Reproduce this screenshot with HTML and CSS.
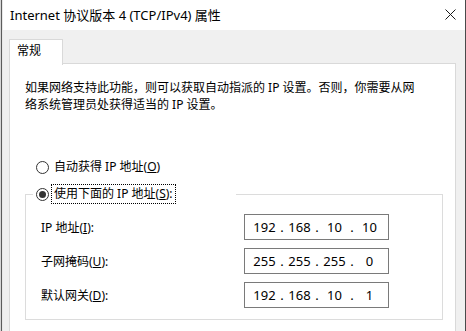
FILE: index.html
```html
<!DOCTYPE html>
<html>
    <head>
        <meta charset="utf-8">
        <title>Internet 协议版本 4 (TCP/IPv4) 属性</title>
        <link rel="stylesheet" href="styles.css">
    </head>
    <body>
        <div class="desk"></div>
        <div class="window">
            <div class="titlebar">
                <span class="title">Internet 协议版本 4 (TCP/IPv4) 属性</span>
                <svg class="close" width="11" height="11" viewBox="0 0 11 11">
                    <path d="M0.5 0.5 L10.5 10.5 M10.5 0.5 L0.5 10.5" stroke="#1a1a1a" stroke-width="1" fill="none"/>
                </svg>
            </div>

            <div class="content">
                <div class="tabs">
                    <div class="tab">常规</div>
                </div>
                <div class="panel">
                    <p class="desc">如果网络支持此功能，则可以获取自动指派的 IP 设置。否则，你需要从网<br>络系统管理员处获得适当的 IP 设置。</p>

                    <div class="radio-row">
                        <span class="radio"></span>
                        <span class="radio-text">自动获得 IP 地址(<u>O</u>)</span>
                    </div>

                    <fieldset class="group">
                        <legend class="radio-row legend">
                            <span class="radio checked"></span>
                            <span class="radio-text focus">使用下面的 IP 地址(<u>S</u>):</span>
                        </legend>

                        <div class="field">
                            <span class="label">IP 地址(<u>I</u>):</span>
                            <div class="ip">
                                <span class="octet">192</span><span class="dot">.</span><span class="octet">168</span><span class="dot">.</span><span class="octet">10</span><span class="dot">.</span><span class="octet">10</span>
                            </div>
                        </div>
                        <div class="field">
                            <span class="label">子网掩码(<u>U</u>):</span>
                            <div class="ip">
                                <span class="octet">255</span><span class="dot">.</span><span class="octet">255</span><span class="dot">.</span><span class="octet">255</span><span class="dot">.</span><span class="octet">0</span>
                            </div>
                        </div>
                        <div class="field">
                            <span class="label">默认网关(<u>D</u>):</span>
                            <div class="ip">
                                <span class="octet">192</span><span class="dot">.</span><span class="octet">168</span><span class="dot">.</span><span class="octet">10</span><span class="dot">.</span><span class="octet">1</span>
                            </div>
                        </div>
                    </fieldset>
                </div>
            </div>
        </div>
    </body>
</html>
```

FILE: styles.css
```css
body {
    margin: 0;
    width: 466px;
    height: 331px;
    overflow: hidden;
    display: flex;
    font-family: "Noto Sans", "Noto Sans CJK SC", sans-serif;
    font-size: 12px;
    color: #000;
    background-color: #f0f0f0;
}
/* bit of the window behind the dialog */
.desk {
    width: 3px;
    flex-shrink: 0;
    background: linear-gradient(to right, #d6d6d6 0, #d6d6d6 1px, #5c5c5c 1px, #5c5c5c 2px, #e8e8e8 2px);
}
.window {
    width: 462px;
    border-right: 1px solid #4a4a4a;
    background-color: #f0f0f0;
    display: flex;
    flex-direction: column;
}
.titlebar {
    height: 30px;
    flex-shrink: 0;
    background-color: #fff;
    display: flex;
    align-items: center;
    justify-content: space-between;
    padding: 0 9px 0 7px;
}
.title {
    font-size: 13px;
    line-height: 16px;
}
.close {
    display: block;
    margin-top: -1px;
}
.content {
    flex: 1;
    display: flex;
    flex-direction: column;
    padding: 9px 9px 0 6px;
}
.tabs {
    display: flex;
    height: 25px;
    margin-bottom: -1px;
}
.tab {
    position: relative;
    z-index: 1;
    width: 45px;
    height: 25px;
    padding-left: 7px;
    background-color: #fff;
    border: 1px solid #d9d9d9;
    border-bottom: none;
    line-height: 22px;
}
.panel {
    flex: 1;
    background-color: #fff;
    border: 1px solid #d9d9d9;
    border-bottom: none;
    padding: 15px 12px 0 15px;
}
.desc {
    margin: 0;
    line-height: 17px;
}
.radio-row {
    display: flex;
    align-items: center;
    height: 20px;
}
.panel > .radio-row {
    margin-top: 44px;
    padding-left: 11px;
}
.radio {
    width: 11px;
    height: 11px;
    border: 1px solid #333;
    border-radius: 50%;
    background-color: #fff;
    display: flex;
    align-items: center;
    justify-content: center;
    flex-shrink: 0;
}
.radio.checked::after {
    content: "";
    width: 7px;
    height: 7px;
    border-radius: 50%;
    background-color: #333;
}
.radio-text {
    margin-left: 2px;
    padding: 0 2px;
    height: 18px;
    line-height: 18px;
    border: 1px solid transparent;
}
.radio-text.focus {
    border: 1px dotted #000;
}
.group {
    margin: 7px 0 0 0;
    width: 418px;
    box-sizing: border-box;
    border: 1px solid #dcdcdc;
    padding: 10px 7px 11px 7px;
}
.legend {
    width: 203px;
    box-sizing: border-box;
    padding: 0 0 0 3px;
    margin-left: 0;
}
.field {
    display: flex;
    align-items: center;
    height: 26px;
    margin-left: 8px;
    margin-bottom: 8px;
}
.field:last-child {
    margin-bottom: 0;
}
.label {
    width: 203px;
}
.ip {
    width: 145px;
    height: 26px;
    box-sizing: border-box;
    border: 1px solid #7a7a7a;
    display: flex;
    align-items: center;
    padding-left: 4px;
    font-size: 13px;
}
.octet {
    width: 31px;
    text-align: center;
}
.dot {
    width: 4px;
    text-align: center;
}
```
